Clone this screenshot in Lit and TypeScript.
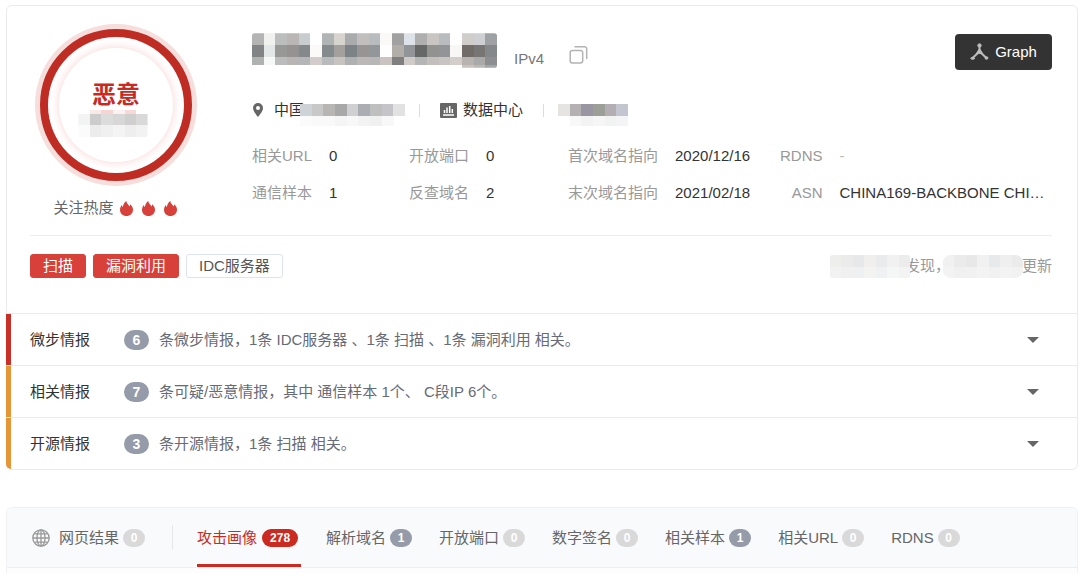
import { LitElement, html, css, svg } from "lit";
import { customElement, property } from "lit/decorators.js";
import { classMap } from "lit/directives/class-map.js";

const CELL = 35;

/* Block mosaic that hides private values. Each row lists cell colours, "-" leaves a gap. */
@customElement("redacted-text")
class RedactedText extends LitElement {
  @property({ attribute: false }) rows: string[] = [];
  @property({ attribute: false }) heights: number[] = [];
  @property({ type: Number }) radius = 0;

  static styles = css`
    :host { display: block; flex: none; }
    .mosaic { display: block; overflow: hidden; }
  `;

  render() {
    const grid = this.rows.map((r) => r.split(" "));
    const w = Math.max(...grid.map((r) => r.length)) * CELL;
    const h = this.heights.reduce((a, b) => a + b, 0);
    let y = 0;
    const cells = grid.map((row, i) => {
      const top = y;
      y += this.heights[i];
      return row.map((c, j) => c === "-" ? "" : svg`<rect x=${j * CELL} y=${top} width=${CELL + 0.5} height=${this.heights[i] + 0.5} fill=${"#" + c}></rect>`);
    });
    return html`<svg class="mosaic" width=${Math.round(w / 3)} height=${Math.round(h / 3)} viewBox="0 0 ${w} ${h}" aria-hidden="true">
      <defs><clipPath id="c"><rect width=${w} height=${h} rx=${this.radius}></rect></clipPath></defs>
      <g clip-path="url(#c)" shape-rendering="crispEdges">${cells}</g>
    </svg>`;
  }
}

const flame = html`<svg class="flame" width="13" height="15" viewBox="0 0 13 15" aria-hidden="true">
  <path fill="#d8403a" d="M6.500 0C6.300 1.500 7.200 2.600 8.300 3.700 9 4.400 9.300 5 9.500 5.500 10 5 10.200 4.300 10.100 3.300 12 4.800 13 6.600 13 8.700 13 12.300 10.200 15 6.500 15S0 12.400 0 9C0 6.900.8 5.200 1.800 3.900c.1 1 .5 1.700 1.100 2C3.300 3.300 4.300 1.200 6.500 0z"/>
</svg>`;

const details = [
  [["相关URL", "0"], ["通信样本", "1"]],
  [["开放端口", "0"], ["反查域名", "2"]],
  [["首次域名指向", "2020/12/16"], ["末次域名指向", "2021/02/18"]],
  [["RDNS", "-"], ["ASN", "CHINA169-BACKBONE CHI…"]],
];

const intel = [
  { level: "high", name: "微步情报", count: 6, text: "条微步情报，1条 IDC服务器 、1条 扫描 、1条 漏洞利用 相关。" },
  { level: "mid", name: "相关情报", count: 7, text: "条可疑/恶意情报，其中 通信样本 1个、 C段IP 6个。" },
  { level: "mid", name: "开源情报", count: 3, text: "条开源情报，1条 扫描 相关。" },
];

const tabs = [
  { name: "攻击画像", count: 278, active: true },
  { name: "解析域名", count: 1 },
  { name: "开放端口", count: 0 },
  { name: "数字签名", count: 0 },
  { name: "相关样本", count: 1 },
  { name: "相关URL", count: 0 },
  { name: "RDNS", count: 0 },
];

@customElement("app-root")
class AppRoot extends LitElement {
  static styles = css`
    :host {
      display: block;
      padding: 5px 2px 0 6px;
      background: #fff;
      color: #333;
      font: 15px/20px "Liberation Sans", "Noto Sans CJK SC", sans-serif;
    }
    * { box-sizing: border-box; }
    button { font: inherit; color: inherit; background: none; border: 0; padding: 0; margin: 0; cursor: pointer; }
    svg { display: block; flex: none; }
    h1, h2, p, dl, dd, ul { margin: 0; padding: 0; font: inherit; }

    .card { border: 1px solid #ebebeb; border-radius: 6px; }
    .summary { padding: 18px 25px 35px 23px; }
    .overview { display: flex; gap: 50px; padding-bottom: 17px; border-bottom: 1px solid #ededed; }

    .rating { width: 172px; flex: none; display: flex; flex-direction: column; align-items: center; gap: 12px; }
    .ring {
      width: 162px; height: 162px; border-radius: 50%;
      border: 5px solid #f6dedd; background: #bf2c24; padding: 8px;
    }
    .ring-gap { height: 100%; border-radius: 50%; background: #fff; padding: 11px; }
    .ring-core {
      height: 100%; border-radius: 50%; background: #fff;
      box-shadow: 0 0 10px rgba(215, 60, 50, 0.22);
      display: flex; flex-direction: column; align-items: center; padding-top: 32px;
    }
    .ring-core .verdict { font-size: 24px; line-height: 30px; font-weight: 700; color: #c9291f; }
    .score { margin-right: 6px; }
    .heat { display: flex; align-items: center; gap: 6px; color: #666; padding-right: 2px; }
    .flames { display: flex; gap: 9px; }

    .info { flex: 1; min-width: 0; padding-top: 9px; }
    .title { display: flex; align-items: flex-start; height: 38px; }
    .version { color: #777; margin: 16px 25px 0 17px; }
    .copy { margin-top: 12px; }
    .graph {
      margin-left: auto; margin-top: 1px; width: 97px; height: 36px; border-radius: 4px;
      background: #333; color: #fff; display: flex; align-items: center; justify-content: center; gap: 6px;
    }
    .place { display: flex; align-items: flex-start; height: 26px; margin: 29px 0 11px; }
    .icon-box { height: 20px; display: flex; align-items: center; }
    .pin { margin: 0 11px 0 1px; }
    .chart { margin-right: 6px; }
    .blur-over { margin: 4px 0 0 -4px; position: relative; }
    .blur { margin-top: 4px; }
    .bar { width: 1px; height: 13px; background: #ddd; margin: 4px 20px 0 14px; }
    .bar.second { margin: 4px 14px 0 20px; }

    .facts { display: grid; grid-template-columns: 157px 159px 212px minmax(0, 1fr); line-height: 37px; }
    .group { display: grid; grid-template-columns: auto minmax(0, 1fr); column-gap: 17px; }
    .group dt { color: #999; }
    .group dd { color: #333; white-space: nowrap; overflow: hidden; text-overflow: ellipsis; }
    .group:last-child dt { text-align: right; }
    .group dd.none { color: #bbb; }

    .meta { display: flex; align-items: center; gap: 7px; padding-top: 18px; }
    .tag { height: 24px; line-height: 22px; padding: 0 12px; border: 1px solid #d8403a; border-radius: 3px; background: #d8403a; color: #fff; }
    .tag.plain { background: #fff; border-color: #dde3ef; color: #555; }
    .updated { display: flex; align-items: center; height: 24px; margin-left: auto; color: #999; }
    .stamp-over { margin-right: -6px; position: relative; }
    .stamp { margin-left: -8px; margin-right: -2px; position: relative; }

    .intel { list-style: none; }
    .row {
      width: calc(100% + 1px); margin-left: -1px; height: 52px; display: flex; align-items: center;
      border-top: 1px solid #ebebeb; text-align: left; padding-right: 38px;
    }
    .row::before { content: ""; width: 5px; height: 100%; flex: none; }
    .row.high::before { background: #c92f27; }
    .row.mid::before { background: #e69537; }
    .intel li:last-child .row::before { border-bottom-left-radius: 5px; }
    .name { width: 94px; margin-left: 19px; }
    .badge {
      display: block; min-width: 22px; height: 18px; line-height: 18px; border-radius: 9px; padding: 0 7px;
      background: #959ba8; color: #fff; font-size: 12px; font-weight: 700; text-align: center;
    }
    .row .badge { width: 25px; height: 20px; line-height: 20px; border-radius: 10px; font-size: 14px; margin-right: 10px; }
    .text { flex: 1; color: #666b75; }

    .panel { margin-top: 37px; border: 1px solid #f0f1f3; border-bottom: 0; border-radius: 6px 6px 0 0; background: #fdfdfe; padding-bottom: 5px; }
    .tabs { display: flex; align-items: stretch; height: 60px; border-bottom: 1px solid #eeeff1; background: #f9fafc; border-radius: 5px 5px 0 0; padding-left: 25px; }
    .tab { display: flex; align-items: center; gap: 4px; margin-right: 25px; padding: 3px 2px 0 0; border-bottom: 3px solid transparent; color: #666; white-space: nowrap; }
    .globe { margin-right: 5px; }
    .tab.active { gap: 5px; padding-right: 3px; color: #cb2a20; border-color: #cb2a20; }
    .tab .badge.zero { background: #d9d9d9; }
    .tab.active .badge { background: #cb2a20; padding: 0 8px; }
    .split { width: 1px; height: 25px; align-self: center; background: #e6e7ea; margin-right: 24px; }
  `;

  private tab(t: { name: string; count: number; active?: boolean }) {
    return html`<button role="tab" aria-selected=${t.active ? "true" : "false"} class=${classMap({ tab: true, active: !!t.active })}>
      <span>${t.name}</span><span class=${classMap({ badge: true, zero: t.count === 0 })}>${t.count}</span>
    </button>`;
  }

  render() {
    return html`
      <section class="card">
        <div class="summary">
          <div class="overview">
            <div class="rating">
              <div class="ring"><div class="ring-gap"><div class="ring-core">
                <h2 class="verdict">恶意</h2>
                <redacted-text class="score" .rows=${["- fbe9e8 f8d5d4 fdf0f0 f8d9d8 -", "f3f3f3 cccccc dcdcdc d7d7d7 cfcfcf d9d9d9", "fbfbfb ececec f0f0f0 f4f4f4 eeeeee f2f2f2"]} .heights=${[12, 35, 35]} radius="6"></redacted-text>
              </div></div></div>
              <div class="heat"><span>关注热度</span><span class="flames">${flame}${flame}${flame}</span></div>
            </div>

            <div class="info">
              <div class="title">
                <redacted-text .rows=${[
                  "b4b4b4 f1f1f0 bcbdbd b9b6b5 c9cccf ffffff b1b4b5 d7d4d0 a9abad c1bfbe b9bcbf faf9f8 a2a1a2 dee2e9 b0afaf c8c5c3 b8bcc0 ffffff d1cdca cdcfd2 9fa2a5",
                  "818385 e3e7e8 989897 959392 85898c fbfaf9 858a8c a3a19e 7d8287 969594 93979a fefefe b1aea9 919598 656866 929291 929496 f9f7f5 726c69 777675 85888b",
                  "b0b1b1 f7f8f8 bbbcbb b7b6b5 b4b6b8 d2cdca b8babb c6c4c1 aeb0b2 bbb9b7 b7b7b8 c9c4c1 7f7f80 d0cbc9 b6b5b5 c4bfbd c8c4c1 d3ceca b8b3b1 a9a9aa 8c8e90",
                  "- - - - - - - - - - - - - - - - - - c6c2c0 bbb9b8 a3a4a5",
                ]} .heights=${[35, 35, 26, 8]} radius="8"></redacted-text>
                <span class="version">IPv4</span>
                <button class="copy" aria-label="复制">
                  <svg width="20" height="20" viewBox="0 0 20 20" fill="none" stroke="#b3b3b3" stroke-width="1.500"><rect x="1.200" y="5.500" width="12.500" height="12.500" rx="2.200"/><path d="M5.500 1.700h10a2.200 2.200 0 0 1 2.200 2.200v10"/></svg>
                </button>
                <button class="graph">
                  <svg width="19" height="18" viewBox="0 0 19 18" fill="#bdbdbd" stroke="#bdbdbd"><path d="M9.500 3v5.500L2.500 15M9.500 8.500l7 6.500" fill="none" stroke-width="1.900"/><path d="M9.500 5.500l3.600 5.800c-2-1.100-5.200-1.100-7.200 0z"/><circle cx="9.500" cy="2.500" r="1.700"/><ellipse cx="2.700" cy="15.300" rx="1.900" ry="1"/><ellipse cx="16.500" cy="15" rx="1.500" ry="1.200"/></svg>
                  <span>Graph</span>
                </button>
              </div>

              <div class="place">
                <span class="icon-box pin"><svg width="10" height="14" viewBox="0 0 10 14"><path fill="#666" fill-rule="evenodd" d="M5 0a5 5 0 0 1 5 5c0 3.500-5 9-5 9S0 8.500 0 5a5 5 0 0 1 5-5zm0 3a2 2 0 1 0 0 4 2 2 0 0 0 0-4z"/></svg></span>
                <span>中国</span>
                <redacted-text class="blur-over" .rows=${["cdd3d6 c9c8c8 b7b6b4 a9a8a9 d0cfd2 aaadb1 bfbfc0 c5c4c8 e2e2e3", "fbfbfb f9f9f9 f9f9fa f5f5f5 f8f8f8 f3f3f4 f0f0f0 f8f8f8 -"]} .heights=${[35, 31]}></redacted-text>
                <span class="bar"></span>
                <span class="icon-box chart"><svg width="17" height="15" viewBox="0 0 17 15"><rect width="17" height="15" rx="1" fill="#666"/><path stroke="#fff" stroke-width="1.500" d="M4.500 7v3M7 4.500V10M9.700 3v7M12.300 6v4M3 12h11"/></svg></span>
                <span>数据中心</span>
                <span class="bar second"></span>
                <redacted-text class="blur" .rows=${["e5e4e2 b5b1b2 9995a1 9c9e98 b3aeb1 c3c6d1", "- f8f8f8 f3f3f4 f6f6f6 f1f2f2 f4f4f6"]} .heights=${[35, 31]}></redacted-text>
              </div>

              <div class="facts">
                ${details.map((g) => html`<dl class="group">${g.map(([k, v]) => html`<dt>${k}</dt><dd class=${classMap({ none: v === "-" })}>${v}</dd>`)}</dl>`)}
              </div>
            </div>
          </div>

          <div class="meta">
            <span class="tag">扫描</span><span class="tag">漏洞利用</span><span class="tag plain">IDC服务器</span>
            <div class="updated">
              <redacted-text class="stamp-over" .rows=${["eeeeed ebebec e6e8ea f0efee e9ebed f1f1f1 ececec", "f2f2f2 f0f0f1 eef0f2 f3f3f2 f0f1f2 f5f6f6 f3f3f3"]} .heights=${[35, 35]} radius="10"></redacted-text>
              <span>发现，</span>
              <redacted-text class="stamp" .rows=${["f1f1f1 ebebeb e8e8e8 f1f1f1 e7eaea efefef ebebeb", "f3f3f3 f0f0f0 f1f1f1 f3f3f3 f1f1f1 f3f3f3 f2f2f2"]} .heights=${[35, 35]} radius="24"></redacted-text>
              <span>更新</span>
            </div>
          </div>
        </div>

        <ul class="intel">
          ${intel.map((r) => html`<li><button class="row ${r.level}" aria-expanded="false">
            <span class="name">${r.name}</span><span class="badge">${r.count}</span><span class="text">${r.text}</span>
            <svg width="12" height="6" viewBox="0 0 12 6" aria-hidden="true"><path fill="#666" d="M0 0h12L6 6z"/></svg>
          </button></li>`)}
        </ul>
      </section>

      <section class="panel">
        <div class="tabs" role="tablist">
          <button class="tab" role="tab" aria-selected="false">
            <svg class="globe" width="18" height="18" viewBox="0 0 18 18" fill="none" stroke="#999" stroke-width="1.300" aria-hidden="true"><circle cx="9" cy="9" r="8.200"/><ellipse cx="9" cy="9" rx="4" ry="8.200"/><path d="M9 1v16M1 9h16M2.500 4.800h13M2.500 13.200h13"/></svg>
            <span>网页结果</span><span class="badge zero">0</span>
          </button>
          <span class="split"></span>
          ${tabs.map((t) => this.tab(t))}
        </div>
      </section>
    `;
  }
}
